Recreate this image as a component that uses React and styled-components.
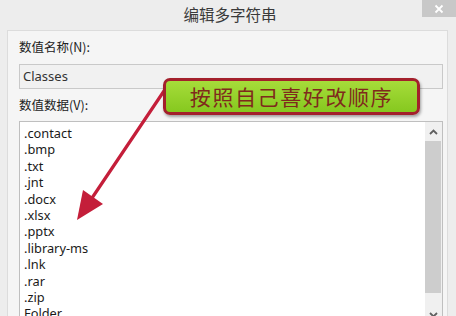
import React from "react";
import styled, { createGlobalStyle } from "styled-components";

const Global = createGlobalStyle`
  html, body { margin: 0; padding: 0; }
  body { width: 456px; height: 316px; overflow: hidden; background: #ececec; }
  * { box-sizing: border-box; }
`;

const Window = styled.div`
  position: relative;
  width: 456px;
  height: 316px;
  overflow: hidden;
  background: #ededed;
  display: flex;
  flex-direction: column;
  font-family: "Noto Sans", "Noto Sans CJK SC", sans-serif;
  color: #222;
`;

const TitleBar = styled.div`
  height: 30px;
  flex: none;
  display: flex;
  align-items: center;
  justify-content: center;
  padding-left: 4px;
`;

const Title = styled.div`
  font-family: "Noto Sans CJK SC", sans-serif;
  font-size: 15.5px;
  color: #3a3a3a;
  margin-top: -3px;
`;

const CloseButton = styled.div`
  position: absolute;
  top: 0;
  right: 0;
  width: 34px;
  height: 17px;
  background: #c8c8c8;
  display: flex;
  align-items: center;
  justify-content: center;
`;

const Panel = styled.div`
  flex: 1;
  margin: 0 8px 0 7px;
  border: 1px solid #dcdcdc;
  border-bottom: none;
  background: #f5f5f5;
  padding: 7px 4px 0 11px;
  display: flex;
  flex-direction: column;
  min-height: 0;
`;

const Label = styled.div`
  font-family: "Noto Sans CJK SC", sans-serif;
  font-size: 12.5px;
  line-height: 18px;
  height: 18px;
  color: #222;
  margin-top: ${(p) => p.$top || 0}px;
`;

const Input = styled.div`
  height: 25px;
  border: 1px solid #c9c9c9;
  background: #f1f1f1;
  font-size: 13px;
  line-height: 23px;
  padding-left: 3px;
  color: #333;
  margin-top: 8px;
`;

const ListBox = styled.div`
  flex: 1;
  min-height: 0;
  margin-top: 7px;
  border: 1px solid #bfbfbf;
  border-bottom: none;
  background: #fff;
  display: flex;
  overflow: hidden;
`;

const Items = styled.div`
  flex: 1;
  padding: 3px 0 0 4px;
`;

const Item = styled.div`
  font-size: 12.8px;
  line-height: 16.4px;
  height: 16.4px;
  color: #1a1a1a;
  white-space: nowrap;
`;

const ScrollBar = styled.div`
  width: 17px;
  flex: none;
  display: flex;
  flex-direction: column;
  align-items: center;
  background: #f0f0f0;
`;

const ArrowBtn = styled.div`
  height: 19px;
  flex: none;
  width: 100%;
  display: flex;
  align-items: center;
  justify-content: center;
  margin-top: ${(p) => p.$top || 0}px;
`;

const Thumb = styled.div`
  width: 16px;
  height: 152px;
  flex: none;
  background: #cdcdcd;
  margin-left: -1px;
`;

const Callout = styled.div`
  position: absolute;
  left: 163px;
  top: 78px;
  width: 257px;
  height: 37px;
  border: 3px solid #a3202c;
  border-radius: 7px;
  background: linear-gradient(#a6dc3a, #86c81f);
  box-shadow: 1px 2px 3px rgba(0, 0, 0, 0.35);
  display: flex;
  align-items: center;
  justify-content: center;
  font-family: "Noto Sans CJK SC", sans-serif;
  font-size: 21px;
  letter-spacing: 1.6px;
  color: #7f2a1c;
  padding-bottom: 1px;
`;

const Overlay = styled.svg`
  position: absolute;
  left: 0;
  top: 0;
  pointer-events: none;
`;

const items = [
  ".contact",
  ".bmp",
  ".txt",
  ".jnt",
  ".docx",
  ".xlsx",
  ".pptx",
  ".library-ms",
  ".lnk",
  ".rar",
  ".zip",
  "Folder",
];

export default function App() {
  return (
    <>
      <Global />
      <Window>
        <TitleBar>
          <Title>编辑多字符串</Title>
          <CloseButton>
            <svg width="10" height="10" viewBox="0 0 10 10">
              <path d="M1.5 1.5 L8.5 8.5 M8.5 1.5 L1.5 8.5" stroke="#fff" strokeWidth="1.8" />
            </svg>
          </CloseButton>
        </TitleBar>
        <Panel>
          <Label>数值名称(N):</Label>
          <Input>Classes</Input>
          <Label $top={7}>数值数据(V):</Label>
          <ListBox>
            <Items>
              {items.map((t) => (
                <Item key={t}>{t}</Item>
              ))}
            </Items>
            <ScrollBar>
              <ArrowBtn>
                <svg width="9" height="6" viewBox="0 0 9 6">
                  <path d="M1 5 L4.5 1.5 L8 5" stroke="#606060" strokeWidth="1.8" fill="none" />
                </svg>
              </ArrowBtn>
              <Thumb />
              <ArrowBtn $top={12}>
                <svg width="9" height="6" viewBox="0 0 9 6">
                  <path d="M1 1 L4.5 4.5 L8 1" stroke="#606060" strokeWidth="1.8" fill="none" />
                </svg>
              </ArrowBtn>
            </ScrollBar>
          </ListBox>
        </Panel>
        <Overlay width="456" height="316" viewBox="0 0 456 316">
          <line x1="166" y1="88" x2="92" y2="198" stroke="#c41e3a" strokeWidth="3.2" strokeLinecap="round" />
          <polygon points="77,220 83,190 103,204" fill="#c41e3a" />
        </Overlay>
        <Callout>按照自己喜好改顺序</Callout>
      </Window>
    </>
  );
}
